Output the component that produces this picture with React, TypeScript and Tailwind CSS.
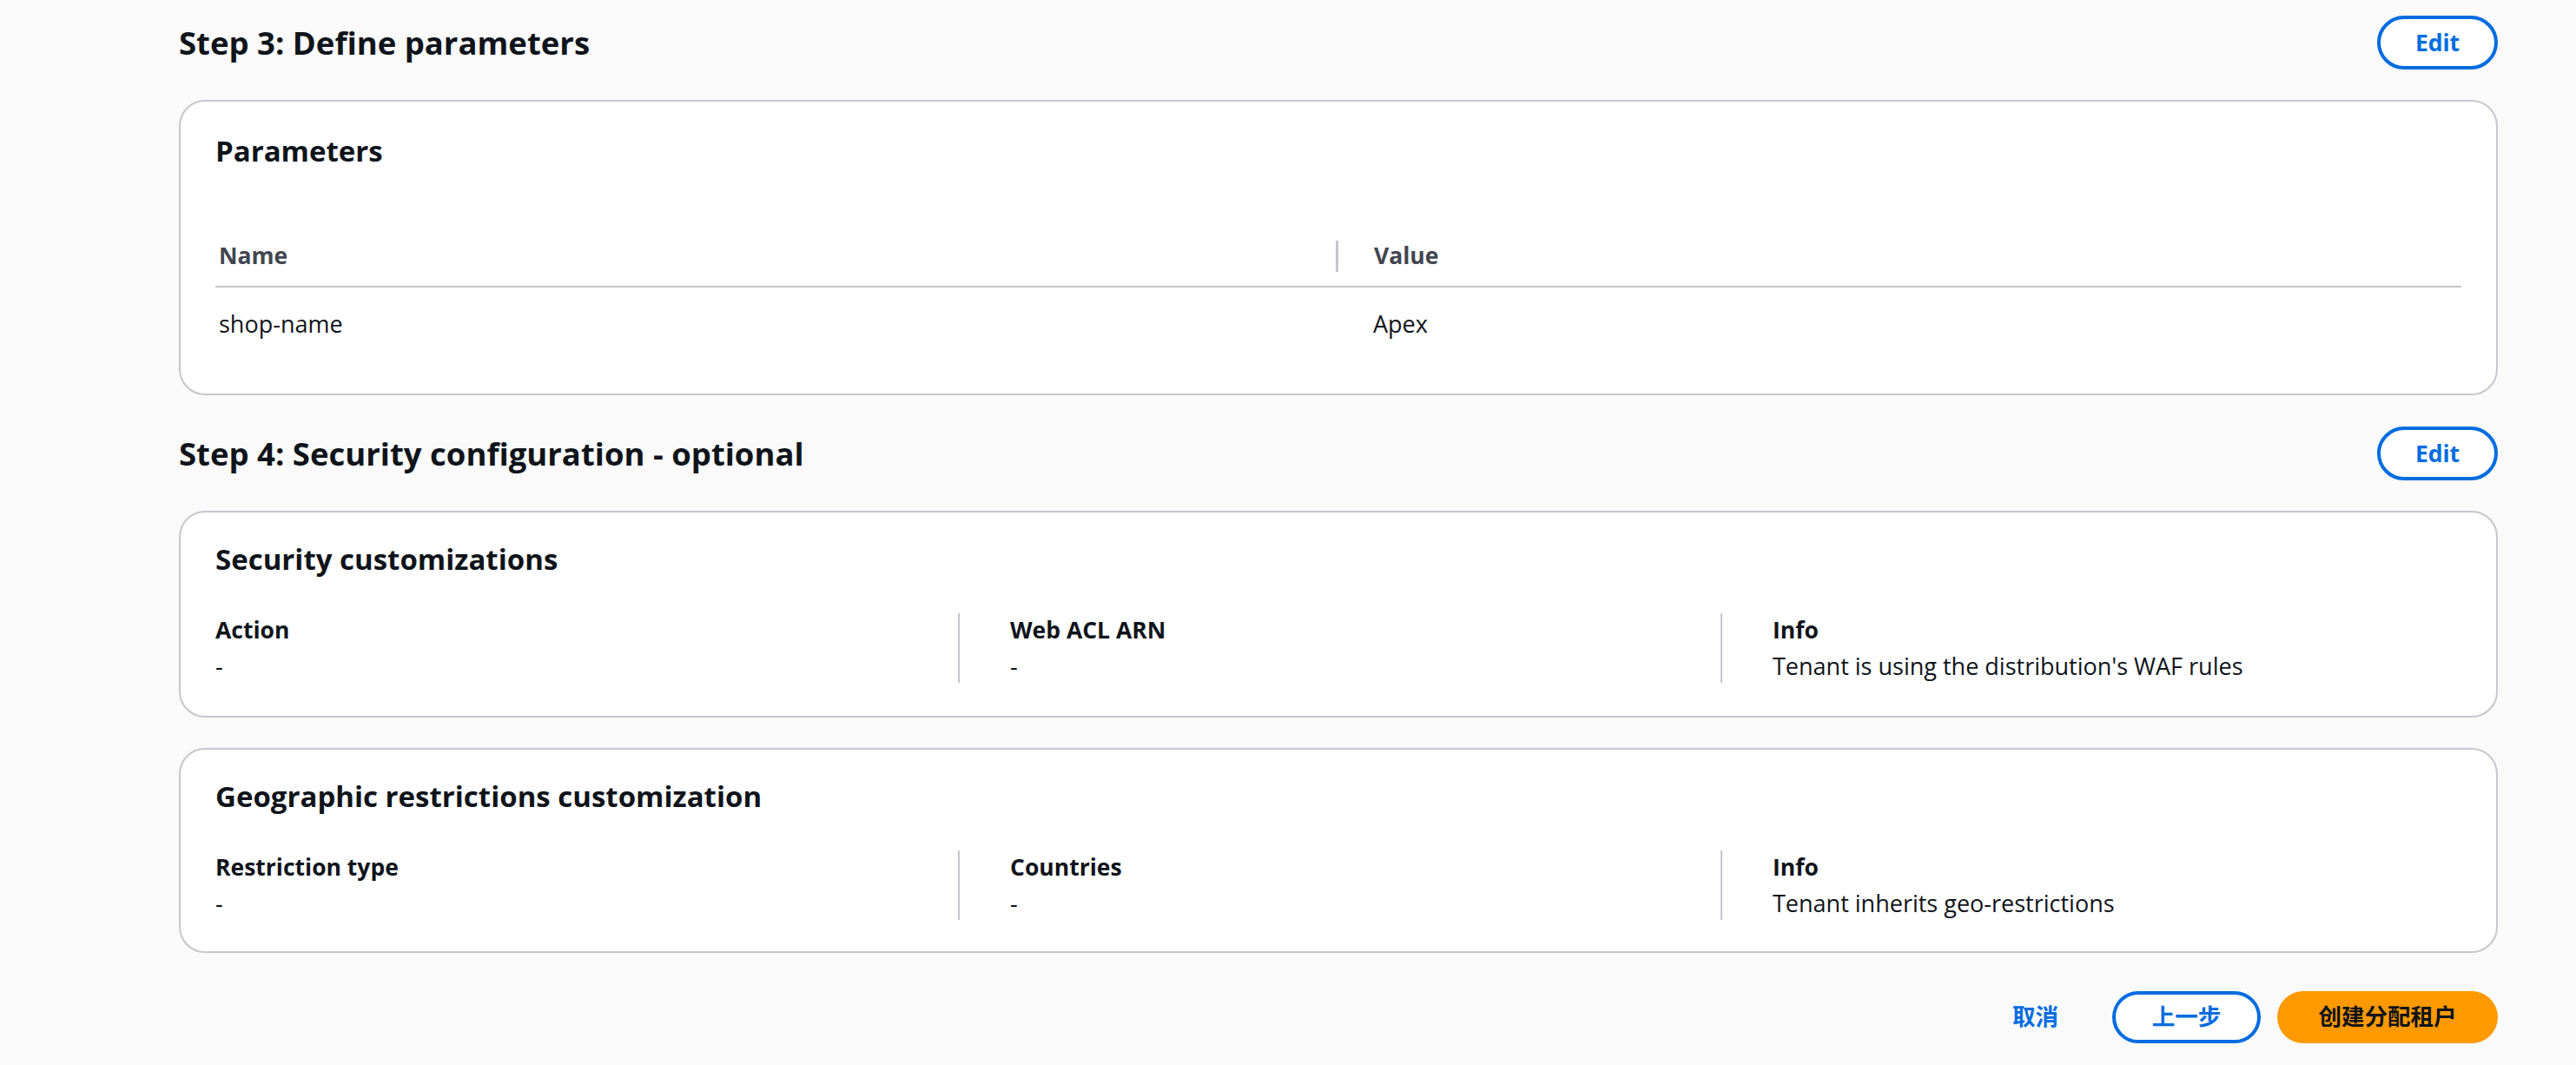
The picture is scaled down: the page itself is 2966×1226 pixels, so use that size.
import type { ReactNode } from "react";

const blue = "text-[#006ce0]";

function EditButton() {
  return (
    <button
      className={`w-[139px] h-[62px] rounded-full border-[4px] border-[#006ce0] bg-white ${blue} text-[26.5px] font-bold leading-none`}
    >
      Edit
    </button>
  );
}

function Section({ title, children, className = "" }: { title: string; children: ReactNode; className?: string }) {
  return (
    <section className={className}>
      <div className="flex h-[62px] items-center justify-between">
        <h2 className="text-[36.5px] font-bold leading-[45px]">{title}</h2>
        <EditButton />
      </div>
      <div className="mt-[35px] flex flex-col gap-[35px]">{children}</div>
    </section>
  );
}

function Card({ title, children, className = "" }: { title: string; children: ReactNode; className?: string }) {
  return (
    <div className={`rounded-[30px] border-2 border-[#c6c6cd] bg-white px-[40px] ${className}`}>
      <h3 className="text-[33px] font-bold leading-[42px]">{title}</h3>
      {children}
    </div>
  );
}

type Field = { label: string; value: string };

function Columns({ fields }: { fields: Field[] }) {
  return (
    <div className="mt-[41px] grid grid-cols-[855px_878px_1fr]">
      {fields.map((f, i) => (
        <div key={f.label} className={i > 0 ? "border-l-2 border-[#c6c6cd] pl-[58px]" : ""}>
          <div className="text-[26.5px] font-bold leading-[38px]">{f.label}</div>
          <div className="mt-[4px] text-[27px] leading-[38px]">{f.value}</div>
        </div>
      ))}
    </div>
  );
}

export default function App() {
  return (
    <div className="min-h-screen bg-[#fafafa] pl-[206px] pr-[90px] pt-[18px] pb-[25px] text-[#0f141a] font-['Open_Sans','Noto_Sans_CJK_SC',sans-serif]">
      <Section title="Step 3: Define parameters">
        <Card title="Parameters" className="pt-[36px] pb-[38px]">
          <div className="mt-[66px]">
            <div className="flex h-[70px] items-center border-b-2 border-[#c6c6cd] text-[26.5px] font-bold text-[#424650]">
              <div className="w-[1290px] pl-[4px]">Name</div>
              <div className="flex items-center">
                <span className="h-[36px] w-[3px] bg-[#c6c6cd]" />
                <span className="ml-[41px]">Value</span>
              </div>
            </div>
            <div className="flex h-[84px] items-center text-[27px]">
              <div className="w-[1290px] pl-[4px]">shop-name</div>
              <div className="pl-[43px]">Apex</div>
            </div>
          </div>
        </Card>
      </Section>

      <Section title="Step 4: Security configuration - optional" className="mt-[36px]">
        <Card title="Security customizations" className="pt-[33px] pb-[38px]">
          <Columns
            fields={[
              { label: "Action", value: "-" },
              { label: "Web ACL ARN", value: "-" },
              { label: "Info", value: "Tenant is using the distribution's WAF rules" },
            ]}
          />
        </Card>
        <Card title="Geographic restrictions customization" className="pt-[33px] pb-[36px]">
          <Columns
            fields={[
              { label: "Restriction type", value: "-" },
              { label: "Countries", value: "-" },
              { label: "Info", value: "Tenant inherits geo-restrictions" },
            ]}
          />
        </Card>
      </Section>

      <div className="mt-[44px] flex items-center justify-end gap-[19px] text-[26.5px] font-bold">
        <button className={`h-[60px] px-[43px] ${blue}`}>取消</button>
        <button className={`h-[60px] w-[171px] rounded-full border-[4px] border-[#006ce0] bg-white ${blue}`}>
          上一步
        </button>
        <button className="h-[60px] w-[254px] rounded-full bg-[#ff9900] text-[#0f141a]">创建分配租户</button>
      </div>
    </div>
  );
}
